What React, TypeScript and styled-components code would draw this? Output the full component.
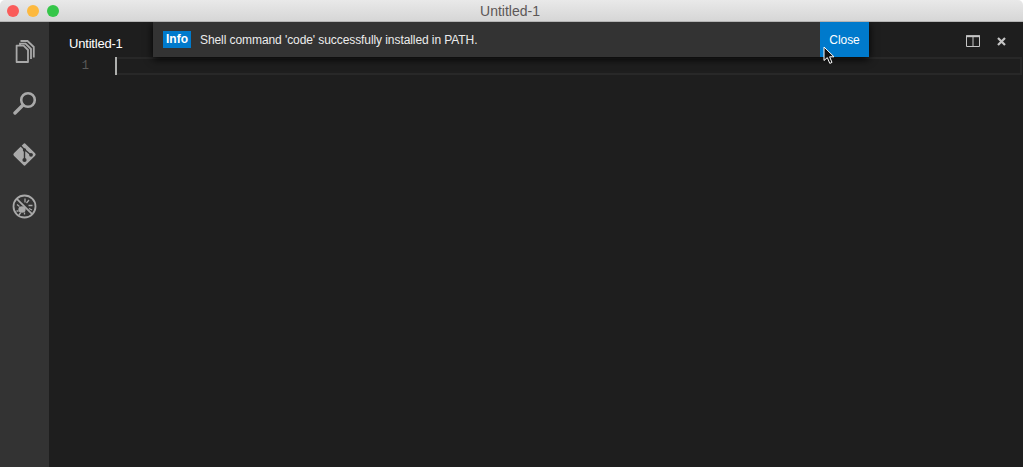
import React from 'react';
import styled, { createGlobalStyle } from 'styled-components';

const GlobalStyle = createGlobalStyle`
  html, body, #root {
    margin: 0;
    height: 100%;
    background: #ffffff;
  }
  body {
    overflow: hidden;
    font-family: "Liberation Sans", Arial, sans-serif;
  }
`;

const FilesIcon = () => (
  <svg width="20" height="23" viewBox="0 0 20 23" fill="none" stroke="#a9a9a9" strokeWidth="1.8">
    <path d="M1.6 5.6 H8.6 L13 10 V22 H1.6 Z" strokeLinejoin="round" />
    <path d="M5 5 V3.6 H10.5 L16 9 V19" />
    <path d="M5.5 1 H12.5 L18.8 7 V17.5" />
  </svg>
);

const SearchIcon = () => (
  <svg width="24" height="24" viewBox="0 0 24 24" fill="none" stroke="#a9a9a9">
    <circle cx="15" cy="9" r="6.8" strokeWidth="2.6" />
    <path d="M9.8 14.2 L2 22" strokeWidth="3.4" strokeLinecap="round" />
  </svg>
);

const GitIcon = () => (
  <svg width="25" height="25" viewBox="0 0 25 25">
    <rect x="4.2" y="4.2" width="16.6" height="16.6" rx="1.6" fill="#a9a9a9" transform="rotate(45 12.5 12.5)" />
    <path d="M8.5 3.5 L12.5 7.5 V18 M12.5 7.5 L19 13" stroke="#333333" strokeWidth="1.4" fill="none" />
    <circle cx="12.5" cy="8" r="1.7" fill="#333333" />
    <circle cx="19" cy="12.8" r="1.9" fill="#333333" />
    <circle cx="12.5" cy="18" r="2.1" fill="#333333" />
  </svg>
);

const DebugIcon = () => (
  <svg width="25" height="25" viewBox="0 0 25 25" fill="none" stroke="#a9a9a9">
    <circle cx="12.5" cy="12.5" r="11" strokeWidth="1.8" />
    <path d="M4.8 4.8 L20.2 20.2" strokeWidth="1.8" />
    <ellipse cx="10" cy="15.5" rx="3.6" ry="3.2" fill="#a9a9a9" stroke="none" />
    <path d="M13 4.5 V8.5 M17 6 L14.5 9 M20.5 11.5 H16.5 M20 16 L17 14.5 M5 10.5 L7.5 12.5 M4.5 17 H6.5 M7 21 L8.8 18.5 M12.5 20.5 V18.5" strokeWidth="1.3" />
  </svg>
);

const SplitIcon = () => (
  <svg width="14" height="12" viewBox="0 0 14 12" fill="none" stroke="#c5c5c5">
    <path d="M.5 1 H13.5 V11.5 H.5 Z M7 1 V11.5" />
    <path d="M0 1.2 H14" strokeWidth="2" />
  </svg>
);

const CloseIcon = () => (
  <svg width="9" height="9" viewBox="0 0 9 9" stroke="#c5c5c5" strokeWidth="2.2">
    <path d="M1 1 L8 8 M8 1 L1 8" />
  </svg>
);

const Pointer = () => (
  <svg width="13" height="19" viewBox="0 0 13 19">
    <path
      d="M1 1 V14.5 L4.3 11.6 L6.8 17.4 L9 16.4 L6.6 10.8 H11 Z"
      fill="#111111"
      stroke="#ffffff"
      strokeWidth="1"
    />
  </svg>
);

export default function App() {
  return (
    <Window>
      <GlobalStyle />
      <TitleBar>
        <Lights>
          <Light color="#fa5c5a" />
          <Light color="#fdb93e" />
          <Light color="#35c649" />
        </Lights>
        <Title>Untitled-1</Title>
      </TitleBar>
      <Body>
        <ActivityBar>
          <ActivityItem><FilesIcon /></ActivityItem>
          <ActivityItem><SearchIcon /></ActivityItem>
          <ActivityItem><GitIcon /></ActivityItem>
          <ActivityItem><DebugIcon /></ActivityItem>
        </ActivityBar>
        <Main>
          <TabBar>
            <Tab>Untitled-1</Tab>
            <TabActions>
              <SplitIcon />
              <CloseIcon />
            </TabActions>
          </TabBar>
          <Editor>
            <Gutter>1</Gutter>
            <CurrentLine>
              <Caret />
            </CurrentLine>
          </Editor>
          <Notification>
            <Badge>Info</Badge>
            <Message>Shell command 'code' successfully installed in PATH.</Message>
            <CloseButton>Close</CloseButton>
          </Notification>
          <CursorMark>
            <Pointer />
          </CursorMark>
        </Main>
      </Body>
    </Window>
  );
}

const Window = styled.div`
  display: flex;
  flex-direction: column;
  width: 1023px;
  height: 467px;
  overflow: hidden;
  border-radius: 5px 5px 0 0;
`;

const TitleBar = styled.div`
  position: relative;
  display: flex;
  flex: 0 0 22px;
  align-items: center;
  justify-content: center;
  box-sizing: border-box;
  background: linear-gradient(#e9e9e9, #d6d6d6);
  border-bottom: 1px solid #b4b4b4;
`;

const Lights = styled.div`
  position: absolute;
  left: 7px;
  top: 5px;
  display: flex;
  gap: 8px;
`;

const Light = styled.span<{ color: string }>`
  width: 12px;
  height: 12px;
  border-radius: 50%;
  background: ${({ color }) => color};
`;

const Title = styled.div`
  font-size: 14px;
  color: #5c5757;
  margin-left: -3px;
`;

const Body = styled.div`
  display: flex;
  flex: 1;
  min-height: 0;
`;

const ActivityBar = styled.div`
  display: flex;
  flex: 0 0 49px;
  flex-direction: column;
  align-items: center;
  padding-top: 4px;
  background: #333333;
`;

const ActivityItem = styled.div`
  display: flex;
  flex: 0 0 51.5px;
  align-items: center;
  justify-content: center;
`;

const Main = styled.div`
  position: relative;
  display: flex;
  flex: 1;
  flex-direction: column;
  min-width: 0;
  overflow: hidden;
  background: #1e1e1e;
`;

const TabBar = styled.div`
  display: flex;
  flex: 0 0 35px;
  align-items: center;
  justify-content: space-between;
  padding: 7px 17px 0 20px;
  box-sizing: border-box;
`;

const Tab = styled.div`
  font-size: 13px;
  letter-spacing: -0.2px;
  color: #ffffff;
`;

const TabActions = styled.div`
  display: flex;
  align-items: center;
  gap: 17px;
  margin-top: -4px;
`;

const Editor = styled.div`
  display: flex;
  flex: 1;
  align-items: flex-start;
`;

const Gutter = styled.div`
  box-sizing: border-box;
  flex: 0 0 66px;
  height: 18px;
  padding-right: 26px;
  font-family: "Liberation Mono", Menlo, monospace;
  font-size: 12px;
  line-height: 18px;
  text-align: right;
  color: #5a5a5a;
`;

const CurrentLine = styled.div`
  flex: 1;
  box-sizing: border-box;
  height: 18px;
  margin-right: 1px;
  border: 2px solid #282828;
  border-left: none;
`;

const Caret = styled.div`
  width: 2px;
  height: 18px;
  margin-top: -2px;
  background: #aeafad;
`;

const Notification = styled.div`
  position: absolute;
  left: 104px;
  top: 0;
  display: flex;
  align-items: center;
  width: 716px;
  height: 35px;
  padding-left: 10px;
  box-sizing: border-box;
  background: #333333;
  box-shadow: 0 2px 8px #000000;
`;

const Badge = styled.span`
  width: 28px;
  height: 17px;
  font-size: 12px;
  font-weight: 700;
  line-height: 17px;
  text-align: center;
  color: #ffffff;
  background: #007acc;
`;

const Message = styled.span`
  flex: 1;
  margin-left: 9px;
  font-size: 12px;
  letter-spacing: -0.08px;
  color: #ececec;
`;

const CloseButton = styled.button`
  width: 49px;
  height: 35px;
  padding: 0;
  border: none;
  font-family: inherit;
  font-size: 12px;
  letter-spacing: -0.05px;
  color: #ffffff;
  background: #007acc;
`;

const CursorMark = styled.div`
  position: absolute;
  left: 774px;
  top: 24px;
  display: flex;
`;
